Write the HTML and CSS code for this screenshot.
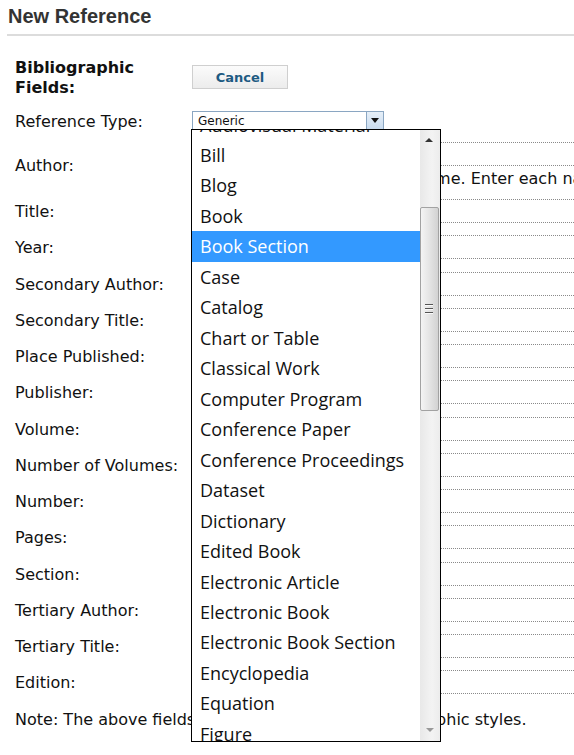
FILE: index.html
```html
<!DOCTYPE html>
<html>
<head>
<meta charset="utf-8">
<title>New Reference</title>
<link rel="stylesheet" href="styles.css">
</head>
<body>
<h1 class="page-title">New Reference</h1>
<div class="rule"></div>
<div class="form">
  <div class="row row-bib">
    <div class="label label-bold">Bibliographic<br>Fields:</div>
    <div class="field"><button class="btn-cancel" type="button">Cancel</button></div>
  </div>
  <div class="row row-type">
    <div class="label">Reference Type:</div>
    <div class="field">
      <div class="select">
        <span class="select-text">Generic</span>
        <span class="select-btn"><span class="tri-down"></span></span>
      </div>
    </div>
  </div>
  <div class="row row-author">
    <div class="label">Author:</div>
    <div class="field">
      <div class="input"></div>
      <div class="hint">Please use Last name, First name. Enter each name on a new line.</div>
    </div>
  </div>
  <div class="row"><div class="label">Title:</div><div class="field"><div class="input"></div></div></div>
  <div class="row"><div class="label">Year:</div><div class="field"><div class="input"></div></div></div>
  <div class="row"><div class="label">Secondary Author:</div><div class="field"><div class="input"></div></div></div>
  <div class="row"><div class="label">Secondary Title:</div><div class="field"><div class="input"></div></div></div>
  <div class="row"><div class="label">Place Published:</div><div class="field"><div class="input"></div></div></div>
  <div class="row"><div class="label">Publisher:</div><div class="field"><div class="input"></div></div></div>
  <div class="row"><div class="label">Volume:</div><div class="field"><div class="input"></div></div></div>
  <div class="row"><div class="label">Number of Volumes:</div><div class="field"><div class="input"></div></div></div>
  <div class="row"><div class="label">Number:</div><div class="field"><div class="input"></div></div></div>
  <div class="row"><div class="label">Pages:</div><div class="field"><div class="input"></div></div></div>
  <div class="row"><div class="label">Section:</div><div class="field"><div class="input"></div></div></div>
  <div class="row"><div class="label">Tertiary Author:</div><div class="field"><div class="input"></div></div></div>
  <div class="row"><div class="label">Tertiary Title:</div><div class="field"><div class="input"></div></div></div>
  <div class="row"><div class="label">Edition:</div><div class="field"><div class="input"></div></div></div>
  <div class="row row-note">Note: The above fields are needed by most bibliographic styles.</div>
</div>

<div class="dropdown">
  <div class="list">
    <div class="list-inner">
      <div class="opt">Audiovisual Material</div>
      <div class="opt">Bill</div>
      <div class="opt">Blog</div>
      <div class="opt">Book</div>
      <div class="opt selected">Book Section</div>
      <div class="opt">Case</div>
      <div class="opt">Catalog</div>
      <div class="opt">Chart or Table</div>
      <div class="opt">Classical Work</div>
      <div class="opt">Computer Program</div>
      <div class="opt">Conference Paper</div>
      <div class="opt">Conference Proceedings</div>
      <div class="opt">Dataset</div>
      <div class="opt">Dictionary</div>
      <div class="opt">Edited Book</div>
      <div class="opt">Electronic Article</div>
      <div class="opt">Electronic Book</div>
      <div class="opt">Electronic Book Section</div>
      <div class="opt">Encyclopedia</div>
      <div class="opt">Equation</div>
      <div class="opt">Figure</div>
    </div>
  </div>
  <div class="scrollbar">
    <span class="sb-up"></span>
    <div class="sb-thumb"><span class="grip"></span><span class="grip"></span><span class="grip"></span></div>
    <span class="sb-down"></span>
  </div>
</div>
</body>
</html>
```
FILE: styles.css
```css
html, body {
  margin: 0;
  padding: 0;
  overflow: hidden;
  background: #fff;
}
body {
  position: relative;
  width: 574px;
  height: 755px;
  font-family: "DejaVu Sans", Verdana, sans-serif;
  color: #111;
}
.page-title {
  margin: 4px 0 0 8px;
  font-family: "Liberation Sans", Arial, sans-serif;
  font-size: 20px;
  line-height: 24px;
  font-weight: bold;
  color: #333;
}
.rule {
  margin: 6px 0 0 7px;
  height: 2px;
  background: #dcdcdc;
}
.form {
  margin-top: 13px;
  padding-left: 15px;
}
.row {
  display: flex;
  align-items: center;
  height: 36.25px;
}
.row-bib { height: 56px; }
.row-type { height: 31px; }
.row-author { height: 57px; }
.row-note {
  height: 36px;
  padding-top: 2px;
  box-sizing: border-box;
  font-size: 16px;
  white-space: nowrap;
}
.label {
  width: 177px;
  flex: none;
  padding-top: 2px;
  font-size: 16px;
  line-height: 20px;
  white-space: nowrap;
}
.label-bold {
  font-weight: bold;
  font-size: 16px;
}
.field {
  flex: none;
  width: 520px;
}
.btn-cancel {
  display: block;
  width: 96px;
  height: 24px;
  margin: 0;
  padding: 0;
  border: 1px solid #cfcfcf;
  background: linear-gradient(#fbfbfb, #ececec);
  font-family: "DejaVu Sans", Verdana, sans-serif;
  font-weight: bold;
  font-size: 13px;
  color: #1d5a82;
}
.select {
  position: relative;
  width: 190px;
  height: 17px;
  border: 1px solid #8aa6c2;
  background: #fff;
  display: flex;
  align-items: center;
}
.select-text {
  padding-left: 5px;
  padding-top: 1px;
  font-size: 12px;
  line-height: 17px;
  color: #111;
}
.select-btn {
  position: absolute;
  right: 0;
  top: 0;
  width: 17px;
  height: 17px;
  box-sizing: border-box;
  border-left: 1px solid #8aa6c2;
  background: linear-gradient(#e6eff8, #c9dbee);
  display: flex;
  align-items: center;
  justify-content: center;
}
.tri-down {
  width: 0;
  height: 0;
  border-left: 4px solid transparent;
  border-right: 4px solid transparent;
  border-top: 5px solid #111;
}
.row-author .field {
  align-self: flex-start;
  padding-top: 6px;
}
.input {
  height: 22px;
  border-top: 1px dotted #8a8a8a;
  border-bottom: 1px dotted #8a8a8a;
}
.hint {
  font-size: 16px;
  line-height: 24px;
  padding-top: 1px;
  white-space: nowrap;
}

/* open dropdown overlay */
.dropdown {
  position: absolute;
  left: 191px;
  top: 129px;
  width: 248px;
  height: 611px;
  border: 1px solid #000;
  background: #fff;
  display: flex;
}
.list {
  width: 228px;
  height: 100%;
  overflow: hidden;
}
.list-inner {
  margin-top: -20.5px;
}
.opt {
  height: 30.47px;
  line-height: 30.47px;
  padding-left: 8px;
  font-family: "Open Sans", "Noto Sans", sans-serif;
  font-size: 18px;
  color: #111;
  white-space: nowrap;
}
.opt.selected {
  background: #3399ff;
  color: #fff;
}
.scrollbar {
  position: relative;
  width: 20px;
  height: 100%;
  background: linear-gradient(to right, #e8e8e8, #f3f3f3 60%, #ececec);
}
.sb-up {
  position: absolute;
  left: 5px;
  top: 8px;
  width: 0;
  height: 0;
  border-left: 4.5px solid transparent;
  border-right: 4.5px solid transparent;
  border-bottom: 4px solid #333;
}
.sb-down {
  position: absolute;
  left: 6px;
  bottom: 9px;
  width: 0;
  height: 0;
  border-left: 4px solid transparent;
  border-right: 4px solid transparent;
  border-top: 4px solid #999;
}
.sb-thumb {
  position: absolute;
  left: 0;
  top: 77px;
  width: 17px;
  height: 202px;
  border: 1px solid #a2a2a2;
  border-radius: 2px;
  background: linear-gradient(to right, #f4f4f4, #e4e4e4 50%, #d2d2d2);
  display: flex;
  flex-direction: column;
  align-items: center;
  justify-content: center;
  gap: 2px;
}
.grip {
  display: block;
  width: 8px;
  height: 1px;
  border-bottom: 1px solid #fafafa;
  background: #555;
  margin-left: -2px;
}
```
